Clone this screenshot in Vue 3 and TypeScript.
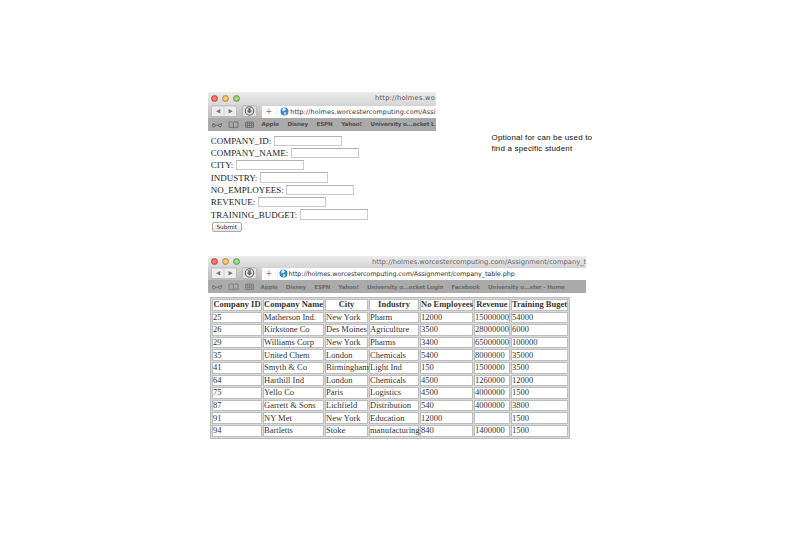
<script setup lang="ts">
interface Browser {
  id: string
  title: string
  url: string
  bookmarks: string[]
}

const formBrowser: Browser = {
  id: 'first',
  title: 'http://holmes.wo',
  url: 'http://holmes.worcestercomputing.com/Assi',
  bookmarks: ['Apple', 'Disney', 'ESPN', 'Yahoo!', 'University o...ocket L'],
}
const tableBrowser: Browser = {
  id: 'second',
  title: 'http://holmes.worcestercomputing.com/Assignment/company_t',
  url: 'http://holmes.worcestercomputing.com/Assignment/company_table.php',
  bookmarks: ['Apple', 'Disney', 'ESPN', 'Yahoo!', 'University o...ocket Login', 'Facebook', 'University o...ster - Home'],
}
const browsers: Browser[] = [formBrowser, tableBrowser]

const fields: string[] = ['COMPANY_ID:', 'COMPANY_NAME:', 'CITY:', 'INDUSTRY:', 'NO_EMPLOYEES:', 'REVENUE:', 'TRAINING_BUDGET:']
const headers: string[] = ['Company ID', 'Company Name', 'City', 'Industry', 'No Employees', 'Revenue', 'Training Buget']
const rows: string[][] = [
  ['25', 'Matherson Ind.', 'New York', 'Pharm', '12000', '15000000', '54000'],
  ['26', 'Kirkstone Co', 'Des Moines', 'Agriculture', '3500', '28000000', '6000'],
  ['29', 'Williams Corp', 'New York', 'Pharms', '3400', '65000000', '100000'],
  ['35', 'United Chem', 'London', 'Chemicals', '5400', '8000000', '35000'],
  ['41', 'Smyth & Co', 'Birmingham', 'Light Ind', '150', '1500000', '3500'],
  ['64', 'Harthill Ind', 'London', 'Chemicals', '4500', '1260000', '12000'],
  ['75', 'Yello Co', 'Paris', 'Logistics', '4500', '4000000', '1500'],
  ['87', 'Garrett & Sons', 'Lichfield', 'Distribution', '540', '4000000', '3800'],
  ['91', 'NY Met', 'New York', 'Education', '12000', '', '1500'],
  ['94', 'Bartletts', 'Stoke', 'manufacturing', '840', '1400000', '1500'],
]
</script>

<template>
  <main class="page">
    <section v-for="b in browsers" :key="b.id" class="panel" :class="b.id">
      <header class="chrome">
        <div class="titlebar">
          <i class="light red"></i><i class="light amber"></i><i class="light green"></i>
          <span class="title">{{ b.title }}</span>
        </div>
        <div class="toolbar">
          <svg class="controls" width="54" height="13" viewBox="0 0 54 13">
            <rect x="3.5" y="1" width="25" height="10.5" rx="1.5" fill="#ededed" stroke="#b5b5b5" stroke-width=".8" />
            <path d="M16 1v10.5" stroke="#c5c5c5" stroke-width=".8" />
            <path d="M12.3 3.9v4.6L8 6.2zM20.5 3.9v4.6l4.3-2.3z" fill="#777" />
            <rect x="34.3" y=".8" width="14.5" height="11" rx="1.5" fill="#dedede" stroke="#aaa" stroke-width=".8" />
            <circle cx="41.5" cy="6" r="4.2" fill="#ddd" stroke="#666" stroke-width="1.1" />
            <path d="M40.3 3.2h2.4v2.6h1.5l-2.7 2.8-2.7-2.8h1.5z" fill="#666" />
          </svg>
          <div class="address">
            <span class="plus">+</span>
            <svg class="globe" width="9" height="9" viewBox="0 0 9 9">
              <circle cx="4.5" cy="4.5" r="4" fill="#3989cf" />
              <path d="M3.1.9l2.2.3.5 1.3-1.3 1.6-1.6.2-.7-1.3zM4.2 5l2 .6-.6 2-1.3.5z" fill="#e7f4fc" />
            </svg>
            <span class="url">{{ b.url }}</span>
          </div>
        </div>
        <nav class="bookmarks">
          <svg class="marks" width="54" height="12" viewBox="0 0 54 12" fill="none" stroke="#666" stroke-width="1">
            <circle cx="5.8" cy="6.5" r="1.4" /><circle cx="12" cy="6.5" r="1.4" />
            <path d="M7.2 6.2h3.4M4.5 5.8l.9-1.6M13.3 5.8V4" />
            <path d="M21 3h3.4l1 .8 1-.8H30v5.3h-3.6l-1 .6-1-.6H21zM25.4 3.8v5" stroke-width=".8" />
            <path d="M37.5 3h8v5.5h-8zM37.5 4.8h8M37.5 6.6h8M39.5 3v5.5M41.5 3v5.5M43.5 3v5.5" stroke-width=".7" />
          </svg>
          <span v-for="mark in b.bookmarks" :key="mark" class="bookmark">{{ mark }}</span>
        </nav>
      </header>

      <form v-if="b.id === 'first'" class="form" @submit.prevent>
        <label v-for="field in fields" :key="field" class="field"><span>{{ field }}</span><input type="text" /></label>
        <button type="submit">Submit</button>
      </form>

      <table v-else class="table">
        <thead>
          <tr><th v-for="(h, i) in headers" :key="h" :class="'c' + i">{{ h }}</th></tr>
        </thead>
        <tbody>
          <tr v-for="row in rows" :key="row[0]"><td v-for="(cell, i) in row" :key="i">{{ cell }}</td></tr>
        </tbody>
      </table>
    </section>
    <aside class="note">Optional for can be used to<br />find a specific student</aside>
  </main>
</template>

<style>
body { margin: 0; background: #fff; }
</style>

<style scoped>
.page {
  box-sizing: border-box;
  width: 799px;
  height: 550px;
  overflow: hidden;
  background: #fff;
  display: grid;
  grid-template-columns: 284px 1fr;
  grid-template-rows: 164.5px 1fr;
  padding: 91.5px 0 0 207.5px;
  font-family: "Liberation Serif", serif;
}
.panel { grid-column: 1; }
.first { width: 228px; }
.second { width: 378.5px; grid-row: 2; }
.chrome { font-family: "DejaVu Sans", sans-serif; overflow: hidden; white-space: nowrap; }
.first .chrome { height: 39.5px; }
.second .chrome { height: 37.5px; }
.titlebar { height: 13.5px; display: flex; align-items: center; background: linear-gradient(#ececec, #d6d6d6); }
.second .titlebar { height: 11px; }
.light { box-sizing: border-box; width: 7px; height: 7px; margin-right: 4px; border-radius: 50%; flex: none; }
.red { margin-left: 3px; background: radial-gradient(#ff8c83, #df5048); border: .7px solid #b84c46; }
.amber { background: radial-gradient(#ffdc88, #e9a83e); border: .7px solid #bd8843; }
.green { background: radial-gradient(#b5e89b, #77b85b); border: .7px solid #679952; }
.title { margin-left: 131.5px; font-size: 6.7px; color: #555; letter-spacing: .22px; }
.second .title { margin-left: 128.5px; color: #666; letter-spacing: .03px; }
.toolbar { height: 13px; display: flex; align-items: center; background: linear-gradient(#d4d4d4, #bbb); }
.controls { flex: none; }
.address { flex: 1; min-width: 0; height: 12px; display: flex; align-items: center; background: #fff; }
.plus { width: 16px; padding-left: 4px; box-sizing: border-box; font-size: 8px; color: #777; border-right: 1px solid #eee; }
.globe { margin: 0 1px 0 3px; flex: none; }
.second .globe { margin: 0 1px 0 1px; }
.url { font-size: 6.45px; color: #333; letter-spacing: .08px; }
.second .url { letter-spacing: -.1px; }
.bookmarks { height: 13px; display: flex; align-items: center; background: #aaa; }
.first .bookmark { position: relative; top: -1px; }
.marks { flex: none; }
.second .marks { opacity: .75; }
.bookmark { flex: none; margin-right: 8.6px; font-size: 5.6px; font-weight: bold; letter-spacing: -.14px; color: #515151; }
.second .bookmark { color: #6c6c6c; font-size: 5.55px; margin-right: 8.2px; letter-spacing: -.15px; }
.second .bookmark:first-of-type { margin-left: -1px; }
.form { padding: 3.6px 0 0 3.2px; }
.field { height: 12.3px; display: flex; align-items: center; font-size: 9px; color: #222; white-space: nowrap; }
.field input { box-sizing: border-box; width: 68px; height: 10.3px; margin: 0 0 0 2.7px; padding: 0; border: 1px solid #c9c9c9; border-top-color: #b0b0b0; background: #fff; border-radius: 0; }
button { display: block; width: 30px; height: 10px; margin: 1.6px 0 0 1px; padding: 0; border: 1px solid #aaa; border-radius: 2px; background: linear-gradient(#fff, #e5e5e5); font: 5.8px/7px "DejaVu Sans", sans-serif; color: #333; }
.table { box-sizing: border-box; width: 360px; margin: 3.5px 0 0 2.5px; table-layout: fixed; border: 1px solid #bbb; border-collapse: separate; border-spacing: 1px; background: #d8d8d8; color: #333; font-size: 8.5px; line-height: 9px; }
th, td { box-sizing: border-box; height: 11.6px; padding: 0; border: 1px solid #bdbdbd; background: #fff; white-space: nowrap; text-align: left; vertical-align: middle; }
th { text-align: center; letter-spacing: .02px; }
.c0 { width: 50px; }
.c1 { width: 61px; }
.c2 { width: 43px; }
.c3 { width: 50px; }
.c4 { width: 53px; }
.c5 { width: 36px; }
.c6 { width: 57px; }
.note { grid-column: 2; grid-row: 1; padding-top: 40px; font: 8px/11.3px "Liberation Sans", sans-serif; letter-spacing: .17px; color: #111; }
</style>
